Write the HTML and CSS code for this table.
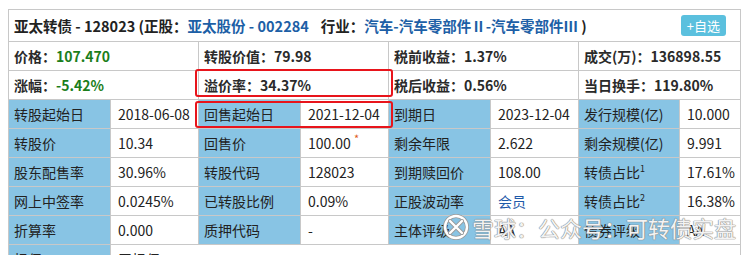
FILE: index.html
```html
<!DOCTYPE html>
<html lang="zh">
<head>
<meta charset="utf-8">
<link rel="stylesheet" href="styles.css">
</head>
<body>
<div class="panel">
  <table class="bond">
    <colgroup>
      <col class="c-l"><col class="c-v"><col class="c-l"><col class="c-v"><col class="c-l"><col class="c-v"><col class="c-l4"><col class="c-v4">
    </colgroup>
    <tr class="title-row">
      <td colspan="8">
        <div class="title-bar">
          <div class="title">亚太转债 - 128023 (正股：<span class="link">亚太股份 - 002284</span><span class="ind">行业：</span><span class="link">汽车-汽车零部件Ⅱ-汽车零部件Ⅲ</span> )</div>
          <span class="fav">+自选</span>
        </div>
      </td>
    </tr>
    <tr class="q-row">
      <td colspan="2">价格：<span class="green">107.470</span></td>
      <td colspan="2">转股价值：79.98</td>
      <td colspan="2">税前收益：1.37%</td>
      <td colspan="2">成交(万)：136898.55</td>
    </tr>
    <tr class="q-row">
      <td colspan="2">涨幅：<span class="green">-5.42%</span></td>
      <td colspan="2">溢价率：34.37%</td>
      <td colspan="2">税后收益：0.56%</td>
      <td colspan="2">当日换手：119.80%</td>
    </tr>
    <tr>
      <th>转股起始日</th><td>2018-06-08</td>
      <th>回售起始日</th><td>2021-12-04</td>
      <th>到期日</th><td>2023-12-04</td>
      <th>发行规模(亿)</th><td>10.000</td>
    </tr>
    <tr>
      <th>转股价</th><td>10.34</td>
      <th>回售价</th><td>100.00 <sup class="star">*</sup></td>
      <th>剩余年限</th><td>2.622</td>
      <th>剩余规模(亿)</th><td>9.991</td>
    </tr>
    <tr>
      <th>股东配售率</th><td>30.96%</td>
      <th>转股代码</th><td>128023</td>
      <th>到期赎回价</th><td>108.00</td>
      <th>转债占比<sup>1</sup></th><td>17.61%</td>
    </tr>
    <tr>
      <th>网上中签率</th><td>0.0245%</td>
      <th>已转股比例</th><td>0.09%</td>
      <th>正股波动率</th><td><span class="link2">会员</span></td>
      <th>转债占比<sup>2</sup></th><td>16.38%</td>
    </tr>
    <tr>
      <th>折算率</th><td>0.000</td>
      <th>质押代码</th><td>-</td>
      <th>主体评级</th><td>AA</td>
      <th>债券评级</th><td>AA</td>
    </tr>
    <tr>
      <th>担保</th><td colspan="7">无担保</td>
    </tr>
  </table>
  <div class="mark mark-1"></div>
  <div class="mark mark-2"></div>
  <div class="watermark">
    <svg class="wm-logo" width="26" height="26" viewBox="0 0 26 26">
      <circle cx="13" cy="13" r="11" fill="none" stroke="#999" stroke-width="4"/>
      <circle cx="13" cy="13" r="11" fill="none" stroke="#fff" stroke-width="2.4"/>
      <path d="M7 7 Q13 13 19 19 M19 7 Q13 13 7 19" fill="none" stroke="#999" stroke-width="4" stroke-linecap="round"/>
      <path d="M7 7 Q13 13 19 19 M19 7 Q13 13 7 19" fill="none" stroke="#fff" stroke-width="2.4" stroke-linecap="round"/>
    </svg>
    <span class="wm-text">雪球：公众号：可转债实盘</span>
  </div>
</div>
</body>
</html>
```

FILE: styles.css
```css
html, body {
  margin: 0;
  padding: 0;
  background: #fff;
}
body {
  font-family: "Noto Sans CJK SC", "Noto Sans", sans-serif;
  font-size: 14px;
  color: #222;
}
.panel {
  position: relative;
  margin: 9px 0 0 8px;
  width: 733px;
}
.bond {
  border-collapse: collapse;
  width: 733px;
  table-layout: fixed;
}
.c-l { width: 102px; }
.c-v { width: 88px; }
.c-l4 { width: 101px; }
.c-v4 { width: 61px; }
.bond td, .bond th {
  border: 1px solid #c8c8c8;
  height: 28px;
  padding: 0 0 0 5px;
  line-height: 20px;
  white-space: nowrap;
  overflow: hidden;
  text-align: left;
}
.bond th {
  background: #88c4e4;
  font-weight: normal;
  color: #222;
}
.bond td { padding-left: 7px; }
.title-row td {
  height: 31px;
  padding: 0 4px 0 5px;
}
.title-bar {
  display: flex;
  align-items: center;
  justify-content: space-between;
}
.title {
  font-weight: bold;
  font-size: 14.5px;
  color: #222;
}
.link { color: #1d5fa6; }
.ind { margin-left: 12px; }
.fav {
  background: #5bc0de;
  color: #fff;
  font-size: 13px;
  border-radius: 3px;
  padding: 0 6px;
  line-height: 21px;
  height: 21px;
  margin-right: 10px;
}
.q-row td {
  font-weight: bold;
  padding-left: 5px;
  color: #2a2a2a;
}
.green { color: #1b7e1b; }
.link2 { color: #1f5aa9; }
sup {
  font-size: 9px;
  line-height: 0;
  vertical-align: 6px;
}
.star { color: #e05a1a; font-size: 11px; }
.mark {
  position: absolute;
  border: 2px solid #e8141b;
  border-radius: 3px;
  left: 187px;
  width: 194px;
}
.mark-1 { top: 60px; height: 24px; }
.mark-2 { top: 92px; height: 23px; }
.watermark {
  position: absolute;
  left: 435px;
  top: 204px;
  display: flex;
  align-items: center;
  gap: 3px;
  pointer-events: none;
}
.wm-text {
  font-size: 22px;
  line-height: 28px;
  color: rgba(255,255,255,0.92);
  text-shadow: 0 0 1px #888, 0 0 1px #888, 0 0 1px #888;
}
```
